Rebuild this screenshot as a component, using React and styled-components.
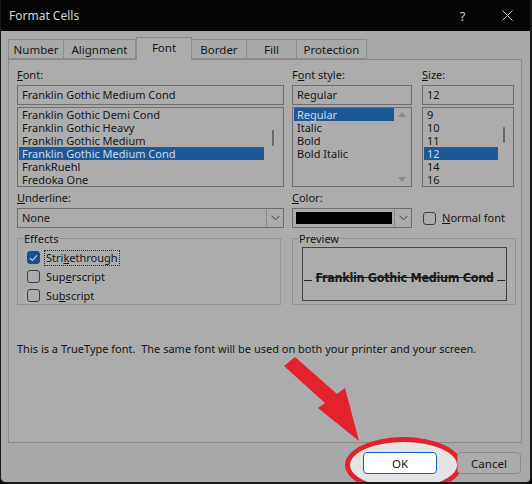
import React from "react";
import styled, { createGlobalStyle } from "styled-components";

const GlobalStyle = createGlobalStyle`
  html, body { margin: 0; padding: 0; background: #000; }
  * { box-sizing: border-box; }
`;

const UI = `"Noto Sans", "Open Sans", sans-serif`;

const Window = styled.div`
  position: relative;
  width: 532px;
  height: 484px;
  background: #a9a9a9;
  border-left: 1px solid #1a1a1a;
  border-right: 2px solid #1a1a1a;
  border-bottom: 2px solid #1a1a1a;
  border-radius: 0 0 6px 6px;
  font-family: ${UI};
  font-size: 11px;
  color: #161616;
  display: flex;
  flex-direction: column;
  overflow: hidden;
`;

const TitleBar = styled.div`
  height: 32px;
  background: #050505;
  display: flex;
  align-items: center;
  padding: 0 0 0 8px;
  color: #d6d6d6;
  font-size: 12px;
`;

const Title = styled.span`
  flex: 1;
`;

const TitleButton = styled.span`
  width: 45px;
  display: flex;
  justify-content: center;
  color: #c8c8c8;
  font-size: 13px;
`;

const Body = styled.div`
  flex: 1;
  display: flex;
  flex-direction: column;
  padding: 6px 8px 0 7px;
`;

const TabRow = styled.div`
  display: flex;
  height: 22px;
  align-items: flex-end;
  position: relative;
  z-index: 1;
`;

const Tab = styled.div`
  width: ${(p) => p.w}px;
  height: ${(p) => (p.active ? 23 : 20)}px;
  margin-bottom: ${(p) => (p.active ? -1 : 0)}px;
  border: 1px solid #8c8c8c;
  border-bottom: ${(p) => (p.active ? "none" : "1px solid #8c8c8c")};
  border-left: ${(p) => (p.first || p.active ? "1px solid #8c8c8c" : "none")};
  background: ${(p) => (p.active ? "#acacac" : "#a9a9a9")};
  display: flex;
  align-items: center;
  justify-content: center;
  font-size: 11.5px;
  padding-bottom: ${(p) => (p.active ? 3 : 0)}px;
`;

const Panel = styled.div`
  height: 384px;
  border: 1px solid #8c8c8c;
  background: #acacac;
  padding: 6px 7px 0 8px;
  display: flex;
  flex-direction: column;
`;

const TopGrid = styled.div`
  display: grid;
  grid-template-columns: 267px 120px 94px;
  column-gap: 8px;
  & > div:nth-child(3) { margin-left: 2px; }
`;

const Column = styled.div`
  display: flex;
  flex-direction: column;
`;

const Label = styled.div`
  height: 17px;
  line-height: 17px;
  margin-bottom: 2px;
`;

const Input = styled.div`
  height: 20px;
  border: 1px solid #6e6e6e;
  padding: 0 4px;
  line-height: 18px;
  margin-bottom: 2px;
`;

const List = styled.div`
  position: relative;
  height: 80px;
  border: 1px solid #6e6e6e;
  padding: 0 1px;
  overflow: hidden;
`;

const Item = styled.div`
  height: 13px;
  line-height: 13px;
  width: ${(p) => p.w}px;
  padding-left: 3px;
  background: ${(p) => (p.selected ? "#1d5996" : "transparent")};
  color: ${(p) => (p.selected ? "#d2d9e2" : "#161616")};
  white-space: nowrap;
`;

const ScrollThumb = styled.div`
  position: absolute;
  right: ${(p) => p.right}px;
  top: ${(p) => p.top}px;
  width: 2px;
  height: 16px;
  background: #6a6a6a;
  border-radius: 1px;
`;

const ScrollArrow = styled.div`
  position: absolute;
  right: 5px;
  ${(p) => (p.down ? "bottom: 4px;" : "top: 4px;")}
  width: 0;
  height: 0;
  border-left: 4px solid transparent;
  border-right: 4px solid transparent;
  ${(p) => (p.down ? "border-top: 5px solid #8a8a8a;" : "border-bottom: 5px solid #8a8a8a;")}
`;

const MidGrid = styled.div`
  display: grid;
  grid-template-columns: 267px 120px 100px;
  column-gap: 8px;
  margin-top: 2px;
`;

const Select = styled.div`
  height: 20px;
  border: 1px solid #6e6e6e;
  display: flex;
  align-items: stretch;
`;

const SelectValue = styled.div`
  flex: 1;
  padding: 0 4px;
  line-height: 18px;
  display: flex;
  align-items: center;
`;

const Swatch = styled.div`
  flex: 1;
  margin: 3px 2px 3px 3px;
  background: #000;
`;

const Chevron = styled.div`
  width: 17px;
  border-left: 1px solid #8c8c8c;
  display: flex;
  align-items: center;
  justify-content: center;
`;

const CheckRow = styled.label`
  display: flex;
  align-items: center;
  gap: 4px;
  height: ${(p) => p.h || 19}px;
`;

const Box = styled.span`
  width: 13px;
  height: 13px;
  border: 1px solid ${(p) => (p.checked ? "#1b4f8c" : "#3e3e3e")};
  border-radius: 3px;
  background: ${(p) => (p.checked ? "#1b4f8c" : "transparent")};
  display: flex;
  align-items: center;
  justify-content: center;
  flex: none;
`;

const CheckText = styled.span`
  padding: 0 1px;
  line-height: 14px;
  border: 1px ${(p) => (p.focus ? "dotted #2a2a2a" : "solid transparent")};
`;

const GroupRow = styled.div`
  display: grid;
  grid-template-columns: 264px 224px;
  column-gap: 11px;
  margin-top: 3px;
`;

const Group = styled.fieldset`
  margin: 0;
  height: 74px;
  border: 1px solid #939393;
  padding: ${(p) => p.pt || 0}px 8px 0 9px;
  min-width: 0;
`;

const Legend = styled.legend`
  padding: 0 1px;
  margin-left: -4px;
  font-size: 11px;
`;

const PreviewBox = styled.div`
  position: relative;
  height: 54px;
  margin-top: 1px;
  border: 1px solid #434343;
  display: flex;
  align-items: center;
  justify-content: center;
  &::before, &::after {
    content: "";
    position: absolute;
    top: 32px;
    width: 8px;
    border-top: 1px solid #222;
  }
  &::before { left: 1px; }
  &::after { right: 1px; }
`;

const PreviewText = styled.span`
  font-family: "DejaVu Sans Condensed", "DejaVu Sans", sans-serif;
  font-stretch: condensed;
  font-weight: bold;
  font-size: 12.5px;
  color: #1a1a1a;
  text-decoration: line-through;
  letter-spacing: -0.3px;
  margin-top: 6px;
`;

const Note = styled.div`
  margin-top: 36px;
`;

const Footer = styled.div`
  position: relative;
  height: 39px;
  display: flex;
  justify-content: flex-end;
  align-items: flex-start;
  padding-top: 9px;
  padding-right: 1px;
  gap: 20px;
`;

const Spotlight = styled.div`
  position: absolute;
  left: 337px;
  top: -6px;
  width: 117px;
  height: 56px;
  border: 5px solid #e2222d;
  border-radius: 50%;
  background: #e4e4e4;
  z-index: 0;
`;

const Button = styled.div`
  position: relative;
  z-index: 1;
  width: ${(p) => p.w}px;
  height: 22px;
  border: 1px solid ${(p) => (p.primary ? "#1665b5" : "#8a8a8a")};
  border-radius: 4px;
  background: ${(p) => (p.primary ? "#fff" : "#ababab")};
  display: flex;
  align-items: center;
  justify-content: center;
  font-size: 11.5px;
`;

const Arrow = styled.svg`
  position: absolute;
  left: 0;
  top: 0;
  pointer-events: none;
  z-index: 2;
`;

const fonts = [
  "Franklin Gothic Demi Cond",
  "Franklin Gothic Heavy",
  "Franklin Gothic Medium",
  "Franklin Gothic Medium Cond",
  "FrankRuehl",
  "Fredoka One",
];
const styles = ["Regular", "Italic", "Bold", "Bold Italic"];
const sizes = ["9", "10", "11", "12", "14", "16"];

const tabs = [
  ["Number", 56],
  ["Alignment", 72],
  ["Font", 56],
  ["Border", 55],
  ["Fill", 50],
  ["Protection", 70],
];

function ChevronIcon() {
  return (
    <svg width="9" height="6" viewBox="0 0 9 6">
      <path d="M0.5 0.8 L4.5 4.8 L8.5 0.8" fill="none" stroke="#3a3a3a" strokeWidth="1" />
    </svg>
  );
}

function Tick() {
  return (
    <svg width="9" height="8" viewBox="0 0 9 8">
      <path d="M1 4.2 L3.4 6.4 L8 1.4" fill="none" stroke="#c9d3de" strokeWidth="1.2" />
    </svg>
  );
}

export default function App() {
  return (
    <>
      <GlobalStyle />
      <Window>
        <TitleBar>
          <Title>Format Cells</Title>
          <TitleButton>?</TitleButton>
          <TitleButton>
            <svg width="11" height="11" viewBox="0 0 11 11">
              <path d="M0.5 0.5 L10.5 10.5 M10.5 0.5 L0.5 10.5" stroke="#c8c8c8" strokeWidth="1" />
            </svg>
          </TitleButton>
        </TitleBar>
        <Body>
          <TabRow>
            {tabs.map(([name, w], i) => (
              <Tab key={name} w={w} first={i === 0} active={name === "Font"}>
                {name}
              </Tab>
            ))}
          </TabRow>
          <Panel>
            <TopGrid>
              <Column>
                <Label><u>F</u>ont:</Label>
                <Input>Franklin Gothic Medium Cond</Input>
                <List>
                  {fonts.map((f) => (
                    <Item key={f} w={245} selected={f === "Franklin Gothic Medium Cond"}>{f}</Item>
                  ))}
                  <ScrollThumb right={9} top={22} />
                </List>
              </Column>
              <Column>
                <Label>F<u>o</u>nt style:</Label>
                <Input>Regular</Input>
                <List>
                  {styles.map((s) => (
                    <Item key={s} w={100} selected={s === "Regular"}>{s}</Item>
                  ))}
                  <ScrollArrow />
                  <ScrollArrow down />
                </List>
              </Column>
              <Column>
                <Label><u>S</u>ize:</Label>
                <Input>12</Input>
                <List>
                  {sizes.map((s) => (
                    <Item key={s} w={74} selected={s === "12"}>{s}</Item>
                  ))}
                  <ScrollThumb right={8} top={19} />
                </List>
              </Column>
            </TopGrid>

            <MidGrid>
              <Column>
                <Label><u>U</u>nderline:</Label>
                <Select>
                  <SelectValue>None</SelectValue>
                  <Chevron><ChevronIcon /></Chevron>
                </Select>
              </Column>
              <Column>
                <Label><u>C</u>olor:</Label>
                <Select>
                  <Swatch />
                  <Chevron><ChevronIcon /></Chevron>
                </Select>
              </Column>
              <Column>
                <Label />
                <CheckRow h={20} style={{ marginLeft: 3 }}>
                  <Box />
                  <CheckText><u>N</u>ormal font</CheckText>
                </CheckRow>
              </Column>
            </MidGrid>

            <GroupRow>
              <Group pt={2}>
                <Legend>Effects</Legend>
                <CheckRow>
                  <Box checked><Tick /></Box>
                  <CheckText focus>Stri<u>k</u>ethrough</CheckText>
                </CheckRow>
                <CheckRow>
                  <Box />
                  <CheckText>Sup<u>e</u>rscript</CheckText>
                </CheckRow>
                <CheckRow>
                  <Box />
                  <CheckText>Su<u>b</u>script</CheckText>
                </CheckRow>
              </Group>
              <Group>
                <Legend>Preview</Legend>
                <PreviewBox>
                  <PreviewText>Franklin Gothic Medium Cond</PreviewText>
                </PreviewBox>
              </Group>
            </GroupRow>

            <Note>This is a TrueType font.&nbsp; The same font will be used on both your printer and your screen.</Note>
          </Panel>
          <Footer>
            <Spotlight />
            <Button primary w={74}>OK</Button>
            <Button w={64}>Cancel</Button>
          </Footer>
        </Body>
        <Arrow width="532" height="484" viewBox="0 0 532 484">
          <path d="M283 366 L294 357 L336 394 L344 388 L358 441 L317 408 L324 403 Z" fill="#e2222d" />
        </Arrow>
      </Window>
    </>
  );
}
